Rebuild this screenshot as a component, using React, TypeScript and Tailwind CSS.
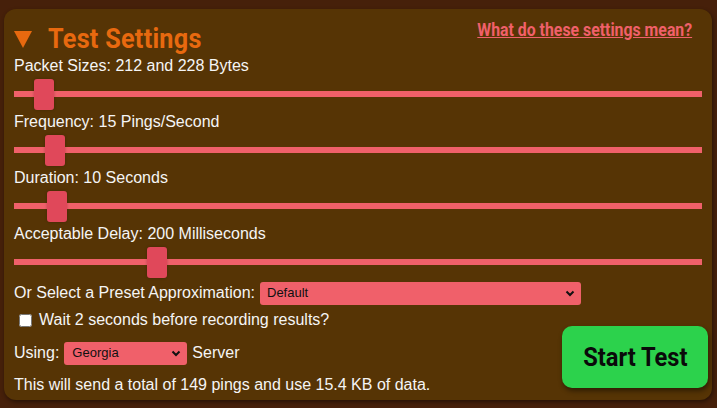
import React from 'react';

const sliders = [
  { label: 'Packet Sizes: 212 and 228 Bytes', pos: 0.03 },
  { label: 'Frequency: 15 Pings/Second', pos: 0.046 },
  { label: 'Duration: 10 Seconds', pos: 0.049 },
  { label: 'Acceptable Delay: 200 Milliseconds', pos: 0.199 },
];

const Chevron: React.FC = () => (
  <svg width="10" height="7" viewBox="0 0 10 7" className="shrink-0">
    <path d="M1.5 1.5 L5 5 L8.5 1.5" fill="none" stroke="#111" strokeWidth="2" />
  </svg>
);

const Slider: React.FC<{ pos: number }> = ({ pos }) => (
  <div className="relative h-[38px] flex items-center">
    <div className="h-[6px] w-full bg-[#f0606a]" />
    {/* thumb */}
    <div
      className="absolute top-[4px] w-[20px] h-[31px] rounded-[3px] bg-[#e0485a] shadow-[0_0_3px_rgba(0,0,0,0.25)]"
      style={{ left: `calc((100% - 20px) * ${pos})` }}
    />
  </div>
);

const App: React.FC = () => {
  return (
    <div className="w-[717px] h-[408px] bg-[#46200a] pt-[9px] px-[4px] pb-[8px] font-['Liberation_Sans',Arial,sans-serif]">
      <div className="h-[391px] w-[708px] rounded-[12px] bg-[#563405] shadow-[1px_2px_4px_rgba(0,0,0,0.45)] pt-[12px] pl-[10px] pr-[10px] text-[#f5f5f5] text-[16px]">
        {/* Header */}
        <div className="h-[36px] flex items-start justify-between">
          <div className="flex items-center gap-[16px] text-[#e8690f] h-[36px]">
            <svg width="18" height="18" viewBox="0 0 18 18">
              <path d="M0 1 L18 1 L9 18 Z" fill="#e8690f" />
            </svg>
            <span className="inline-block origin-left scale-x-[0.9] font-['Roboto',sans-serif] text-[28px] font-bold leading-none tracking-[0.3px]">
              Test Settings
            </span>
          </div>
          <a
            href="#"
            className="inline-block origin-right scale-x-[0.88] -mt-[1px] mr-[10px] font-['Roboto',sans-serif] text-[18px] font-bold text-[#f0606a] underline leading-[20px]"
          >
            What do these settings mean?
          </a>
        </div>

        {sliders.map((s) => (
          <div key={s.label}>
            <div className="h-[18px] leading-[18px]">{s.label}</div>
            <Slider pos={s.pos} />
          </div>
        ))}

        {/* Preset */}
        <div className="h-[24px] flex items-center gap-[5px]">
          <span>Or Select a Preset Approximation:</span>
          <div className="w-[321px] h-[23px] rounded-[3px] bg-[#f0606a] flex items-center justify-between pl-[7px] pr-[6px] text-[13px] text-[#111]">
            <span>Default</span>
            <Chevron />
          </div>
        </div>

        <div className="flex items-end justify-between">
          <div className="pt-[3px]">
            <label className="h-[24px] flex items-center gap-[7px] pl-[5px]">
              <input type="checkbox" className="w-[13px] h-[13px] m-0" />
              <span>Wait 2 seconds before recording results?</span>
            </label>
            <div className="mt-[9px] h-[24px] flex items-center gap-[5px]">
              <span>Using:</span>
              <div className="w-[123px] h-[23px] rounded-[3px] bg-[#f0606a] flex items-center justify-between pl-[8px] pr-[6px] text-[13px] text-[#111]">
                <span>Georgia</span>
                <Chevron />
              </div>
              <span>Server</span>
            </div>
            <div className="mt-[10px] h-[20px] leading-[20px]">
              This will send a total of 149 pings and use 15.4 KB of data.
            </div>
          </div>
          <button className="mb-[7px] -mr-[6px] w-[146px] h-[62px] rounded-[10px] bg-[#2cd24c] text-[#0a0a0a] shadow-[1px_3px_5px_rgba(0,0,0,0.45)]">
            <span className="inline-block scale-x-[0.91] font-['Roboto',sans-serif] text-[26px] font-bold">
              Start Test
            </span>
          </button>
        </div>
      </div>
    </div>
  );
};

export default App;
